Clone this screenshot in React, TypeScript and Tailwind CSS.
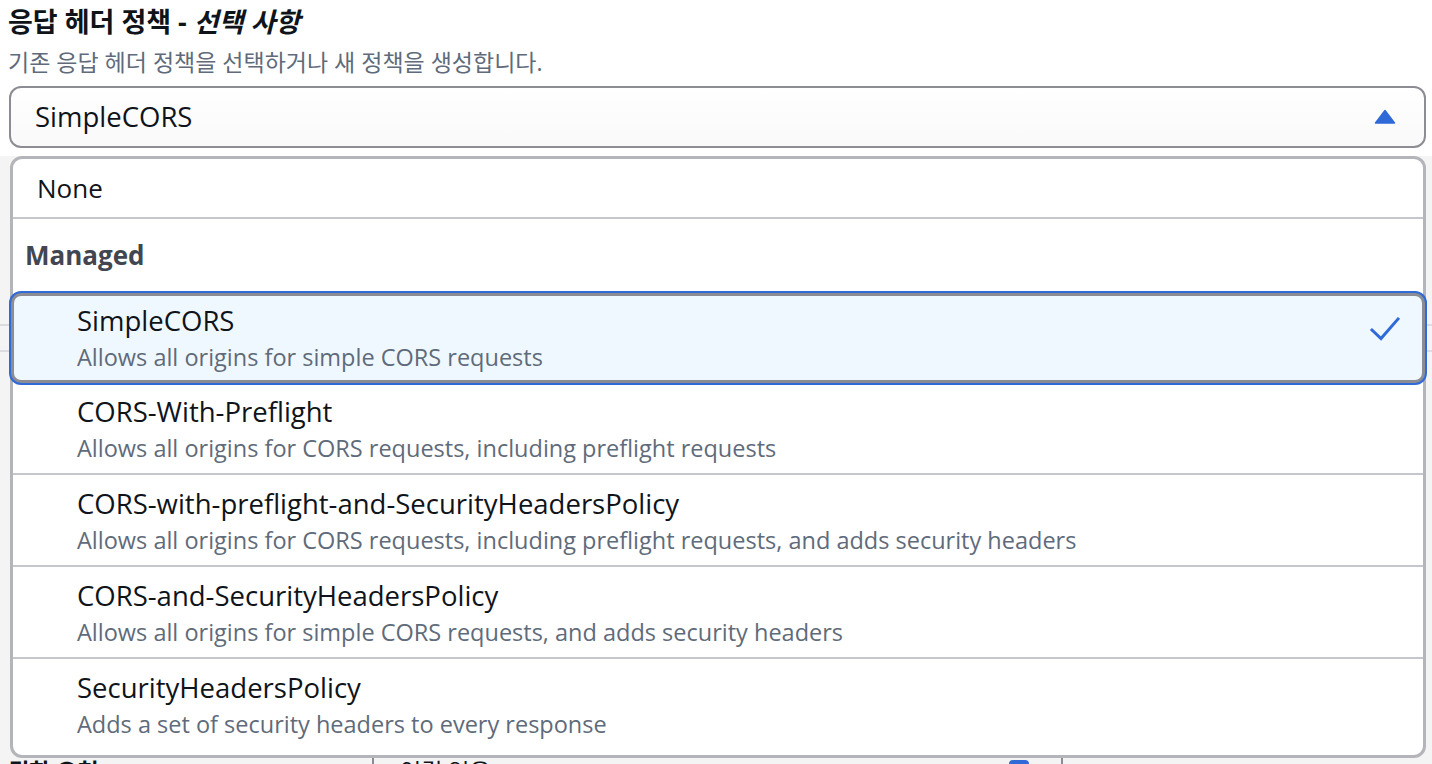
import React from 'react';

const font = { fontFamily: '"Open Sans", "Noto Sans CJK KR", sans-serif' };

interface Policy {
  name: string;
  desc: string;
}

const policies: Policy[] = [
  { name: 'CORS-With-Preflight', desc: 'Allows all origins for CORS requests, including preflight requests' },
  {
    name: 'CORS-with-preflight-and-SecurityHeadersPolicy',
    desc: 'Allows all origins for CORS requests, including preflight requests, and adds security headers',
  },
  { name: 'CORS-and-SecurityHeadersPolicy', desc: 'Allows all origins for simple CORS requests, and adds security headers' },
  { name: 'SecurityHeadersPolicy', desc: 'Adds a set of security headers to every response' },
];

const CheckIcon = () => (
  <svg width="32" height="26" viewBox="0 0 32 26" fill="none">
    <path d="M3 14 L12 22.5 L29 3" stroke="#2f6ad8" strokeWidth="3" strokeLinecap="square" />
  </svg>
);

const CaretUp = () => (
  <svg width="22" height="16" viewBox="0 0 22 16">
    <path d="M11 1.5 L20.5 14 H1.5 Z" fill="#2f6ad8" stroke="#2f6ad8" strokeWidth="1.5" strokeLinejoin="round" />
  </svg>
);

export default function App() {
  return (
    <div className="w-[1432px] h-[764px] overflow-hidden bg-[#f4f4f4] flex flex-col" style={font}>
      {/* form header */}
      <div className="bg-white pt-[6px] pb-[8px]">
        <div className="pl-[8px] text-[27px] leading-[32px] font-bold text-[#0f141a]">
          응답 헤더 정책 - <i>선택 사항</i>
        </div>
        <div className="pl-[8px] mt-[9px] text-[23px] leading-[30px] text-[#5f6b7a]">
          기존 응답 헤더 정책을 선택하거나 새 정책을 생성합니다.
        </div>
        <div className="mt-[9px] ml-[9px] w-[1417px] h-[62px] rounded-[12px] border-2 border-[#8c8c94] bg-gradient-to-b from-white to-[#f9f9f9] flex items-center justify-between pl-[24px] pr-[28px]">
          <span className="text-[27.5px] text-[#0f141a]">SimpleCORS</span>
          <CaretUp />
        </div>
      </div>

      {/* content behind the dropdown */}
      <div className="relative flex-1">
        <div className="h-[168px]" />
        <div className="border-t-2 border-[#dcdce0] h-[26px]" />
        <div className="border-t-2 border-[#dcdce0] h-[406px]" />
        <div className="flex items-start h-[40px]">
          <div className="w-[372px] pl-[8px] text-[23px] font-bold text-[#0f141a] leading-[30px]">권한 요청</div>
          <div className="border-l-2 border-[#8c8c94] h-full pl-[26px] flex-1 flex items-start">
            <span className="text-[23px] text-[#0f141a] leading-[30px]">연결 없음</span>
            <span className="ml-[518px] w-[20px] h-[20px] rounded-[4px] bg-[#2f6ad8] mt-[4px]" />
            <span className="ml-[32px] border-l-2 border-[#8c8c94] h-full" />
          </div>
        </div>

        {/* dropdown overlay */}
        <div className="absolute left-[10px] top-0 w-[1416px] h-[602px] rounded-[12px] border-[3px] border-[#b4b4bb] bg-white flex flex-col">
          <div className="h-[60px] pl-[24px] flex items-center border-b-2 border-[#c6c6cd] text-[26px] text-[#0f141a]">
            None
          </div>
          <div className="h-[74px] pl-[12px] pt-[20px] text-[26px] leading-[32px] font-bold text-[#424650]">Managed</div>
          <div className="-mx-[2px] h-[90px] rounded-[10px] border-[3px] border-[#8c8c94] ring-2 ring-[#2f6ad8] bg-[#f0f8ff] pl-[63px] pr-[21px] pt-[9px] flex justify-between">
            <div>
              <div className="text-[27.5px] leading-[32px] text-[#0f141a]">SimpleCORS</div>
              <div className="mt-[6px] text-[23.5px] leading-[28px] text-[#5f6b7a]">Allows all origins for simple CORS requests</div>
            </div>
            <div className="pt-[11px]">
              <CheckIcon />
            </div>
          </div>
          {policies.map((p, i) => (
            <div
              key={p.name}
              className={`pl-[64px] pt-[13px] ${i > 0 ? 'border-t-2 border-[#c6c6cd] h-[92px]' : 'h-[90px]'}`}
            >
              <div className="text-[27.5px] leading-[32px] text-[#0f141a]">{p.name}</div>
              <div className="mt-[6px] text-[23.5px] leading-[28px] text-[#5f6b7a]">{p.desc}</div>
            </div>
          ))}
        </div>
      </div>
    </div>
  );
}
